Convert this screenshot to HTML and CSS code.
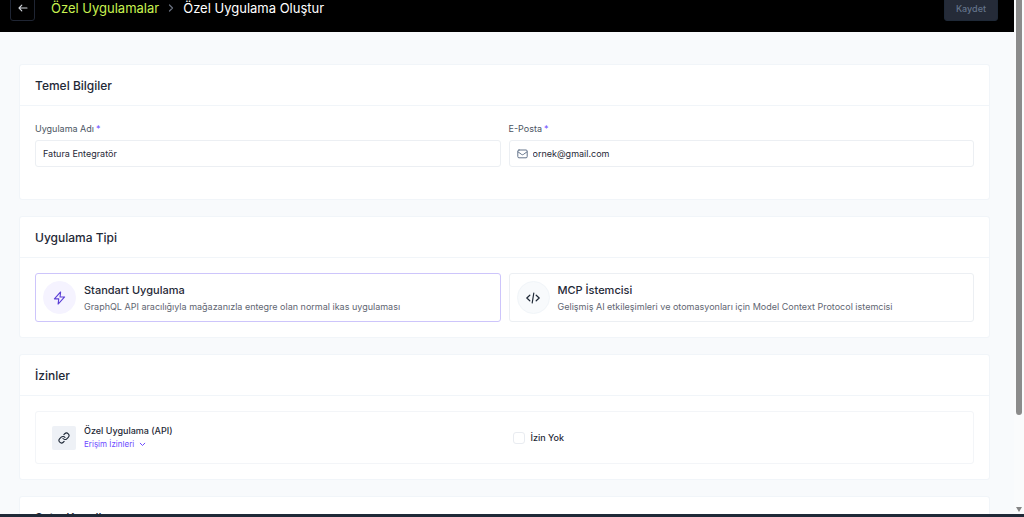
FILE: index.html
```html
<!DOCTYPE html>
<html lang="tr">
<head>
<meta charset="utf-8">
<meta name="viewport" content="width=device-width, initial-scale=1">
<title>Özel Uygulama Oluştur</title>
<link rel="stylesheet" href="styles.css">
</head>
<body>
<div class="window">
  <div class="page">
    <header class="topbar">
      <div class="topbar-row">
        <button class="back" type="button" aria-label="Geri">
          <svg width="10" height="8" viewBox="0 0 10 8" fill="none" stroke="currentColor" stroke-width="1.1" stroke-linecap="round" stroke-linejoin="round"><path d="M9 4H1M3.8 1.2 1 4l2.800 2.800"/></svg>
        </button>
        <nav class="crumbs">
          <a class="crumb-link" href="#">Özel Uygulamalar</a>
          <svg width="6" height="8" viewBox="0 0 6 8" fill="none" stroke="#6b7280" stroke-width="1.2" stroke-linecap="round" stroke-linejoin="round"><path d="M1.500 1 4.500 4l-3 3"/></svg>
          <span class="crumb-current">Özel Uygulama Oluştur</span>
        </nav>
        <button class="save" type="button" disabled>Kaydet</button>
      </div>
    </header>
    <main class="content">
      <section class="card">
        <h2 class="card-title">Temel Bilgiler</h2>
        <div class="card-body fields">
          <div class="field">
            <label class="label" for="name">Uygulama Adı<span class="required">*</span></label>
            <div class="control"><input class="input" id="name" type="text" value="Fatura Entegratör"></div>
          </div>
          <div class="field">
            <label class="label" for="email">E-Posta<span class="required">*</span></label>
            <div class="control">
              <svg class="mail" width="11" height="10" viewBox="0 0 11 10" fill="none" stroke="currentColor" stroke-linecap="round" stroke-linejoin="round"><rect x=".8" y="1" width="9.400" height="7.800" rx="1.200"/><path d="m1 2.800 3.700 2.700q.8.500 1.600 0L10 2.800"/></svg>
              <input class="input" id="email" type="email" value="ornek@gmail.com">
            </div>
          </div>
        </div>
      </section>

      <section class="card">
        <h2 class="card-title">Uygulama Tipi</h2>
        <div class="card-body types">
          <button class="type type-selected" type="button">
            <span class="type-icon">
              <svg width="13" height="14" viewBox="0 0 14 15" fill="none" stroke="currentColor" stroke-width="1.200" stroke-linecap="round" stroke-linejoin="round"><path d="M8.200 1 1.500 8.400h4.700L5.500 14l7-7.600H7.600z"/></svg>
            </span>
            <span class="type-text">
              <span class="type-name">Standart Uygulama</span>
              <span class="type-desc">GraphQL API aracılığıyla mağazanızla entegre olan normal ikas uygulaması</span>
            </span>
          </button>
          <button class="type" type="button">
            <span class="type-icon">
              <svg width="14" height="12" viewBox="0 0 14 12" fill="none" stroke="currentColor" stroke-width="1.200" stroke-linecap="round" stroke-linejoin="round"><path d="M3.800 3.200.8 6l3 2.800M10.200 3.200l3 2.800-3 2.800M7.800 1 6.200 11"/></svg>
            </span>
            <span class="type-text">
              <span class="type-name">MCP İstemcisi</span>
              <span class="type-desc">Gelişmiş AI etkileşimleri ve otomasyonları için Model Context Protocol istemcisi</span>
            </span>
          </button>
        </div>
      </section>

      <section class="card">
        <h2 class="card-title">İzinler</h2>
        <div class="card-body">
          <div class="permission">
            <div class="scope">
              <span class="scope-icon">
                <svg width="12" height="12" viewBox="0 0 24 24" fill="none" stroke="currentColor" stroke-width="2.200" stroke-linecap="round" stroke-linejoin="round"><path d="M10 13a5 5 0 0 0 7.540.540l3-3a5 5 0 0 0-7.070-7.070l-1.720 1.710"/><path d="M14 11a5 5 0 0 0-7.540-.540l-3 3a5 5 0 0 0 7.070 7.070l1.710-1.710"/></svg>
              </span>
              <div class="scope-text">
                <span class="scope-name">Özel Uygulama (API)</span>
                <button class="scope-toggle" type="button">Erişim İzinleri
                  <svg width="7" height="5" viewBox="0 0 7 5" fill="none" stroke="currentColor" stroke-linecap="round" stroke-linejoin="round"><path d="m1.200 1.200 2.300 2.300 2.300-2.300"/></svg>
                </button>
              </div>
            </div>
            <label class="check"><input class="checkbox" type="checkbox">İzin Yok</label>
          </div>
        </div>
      </section>

      <section class="card">
        <h2 class="card-title">Satış Kanalları</h2>
      </section>
    </main>
  </div>
  <div class="scrollbar" aria-hidden="true">
    <div class="thumb"></div>
    <div class="arrow"></div>
  </div>
</div>
</body>
</html>
```
FILE: styles.css
```css
* { box-sizing: border-box; }

body {
  margin: 0;
  font-family: Inter, "Liberation Sans", sans-serif;
  font-size: 9px;
  color: #1f2937;
}

button, input { font: inherit; color: inherit; }

.window {
  display: flex;
  height: 100vh;
  overflow: hidden;
  background: #f8fafc;
  border-bottom: 3px solid #1f2937;
}

.page { flex: 1; min-width: 0; overflow: hidden; }

.topbar {
  display: flex;
  align-items: flex-end;
  height: 32px;
  overflow: hidden;
  padding: 0 16px 11px 10px;
  background: #000;
}

.topbar-row { display: flex; align-items: center; flex: 1; gap: 16px; }

.back {
  display: flex;
  align-items: center;
  justify-content: center;
  width: 25px;
  height: 26px;
  padding: 0;
  border: 1px solid #1f2533;
  border-radius: 3px;
  background: #000;
  color: #d1d5db;
}

.crumbs { display: flex; align-items: center; gap: 9px; flex: 1; font-size: 13px; line-height: 20px; }
.crumb-link { color: #c8f250; text-decoration: none; }
.crumb-current { color: #fff; }

.save {
  height: 26px;
  padding: 0 11px;
  border: 1px solid #1f2937;
  border-radius: 3px;
  background: #252b38;
  color: #64748b;
  font-weight: 500;
}

.content {
  display: flex;
  flex-direction: column;
  gap: 16px;
  padding: 32px 24px 16px 19px;
}

.card {
  border: 1px solid #f1f5f9;
  border-radius: 3px;
  background: #fff;
}

.card-title {
  margin: 0;
  padding: 11px 15px 9px;
  border-bottom: 1px solid #f1f5f9;
  font-size: 12px;
  line-height: 20px;
  font-weight: 500;
}

.card-body { padding: 15px; }

.fields, .types { display: grid; grid-template-columns: 1fr 1fr; gap: 8px; }
.fields { padding: 16px 15px 32px; }

.label { display: block; margin-bottom: 4px; line-height: 14px; color: #4b5563; }
.required { margin-left: 2px; color: #6d4aff; }

.control {
  display: flex;
  align-items: center;
  gap: 5px;
  height: 27px;
  padding: 0 7px;
  border: 1px solid #eceff3;
  border-radius: 3px;
}

.mail { color: #64748b; flex: none; }

.input {
  flex: 1;
  min-width: 0;
  padding: 0;
  border: 0;
  outline: 0;
  background: transparent;
}

.type {
  display: flex;
  align-items: center;
  gap: 8px;
  padding: 7px;
  border: 1px solid #eceff3;
  border-radius: 3px;
  background: #fff;
  text-align: left;
}

.type-icon {
  display: flex;
  flex: none;
  align-items: center;
  justify-content: center;
  width: 33px;
  height: 33px;
  border: 1px solid #f1f5f9;
  border-radius: 50%;
  background: #f8fafc;
}

.type-selected { border-color: #cdc5fb; }
.type-selected .type-icon { border-color: #f5f3ff; background: #f5f3ff; color: #5b3fd6; }

.type-text { display: flex; flex-direction: column; gap: 2px; }
.type-name { font-size: 11px; line-height: 16px; font-weight: 500; }
.type-desc { line-height: 14px; color: #5f6672; }

.permission {
  display: grid;
  grid-template-columns: 1fr 1fr;
  align-items: center;
  gap: 16px;
  padding: 12px 16px;
  border: 1px solid #f3f5f8;
  border-radius: 3px;
}

.scope { display: flex; align-items: center; gap: 8px; }

.scope-icon {
  display: flex;
  align-items: center;
  justify-content: center;
  width: 24px;
  height: 24px;
  border-radius: 2px;
  background: #eef1f6;
}

.scope-text { display: flex; flex-direction: column; align-items: flex-start; }
.scope-name { line-height: 14px; font-weight: 500; }

.scope-toggle {
  display: flex;
  align-items: center;
  gap: 5px;
  padding: 0;
  border: 0;
  background: none;
  font-size: 8px;
  line-height: 13px;
  color: #6d4aff;
}

.check { display: flex; align-items: center; gap: 6px; font-weight: 500; }

.checkbox {
  appearance: none;
  width: 12px;
  height: 12px;
  margin: 0;
  border: 1px solid #e9ecf1;
  border-radius: 3px;
  background: #fff;
}

.scrollbar {
  display: flex;
  flex-direction: column;
  align-items: center;
  justify-content: space-between;
  width: 10px;
  padding-bottom: 2px;
  background: #fafbfc;
}

.thumb { width: 6px; height: 81%; border-radius: 0 0 3px 3px; background: #8b8b8b; }

.arrow {
  border: 3px solid transparent;
  border-top: 5px solid #858585;
  border-bottom: 0;
}
```
